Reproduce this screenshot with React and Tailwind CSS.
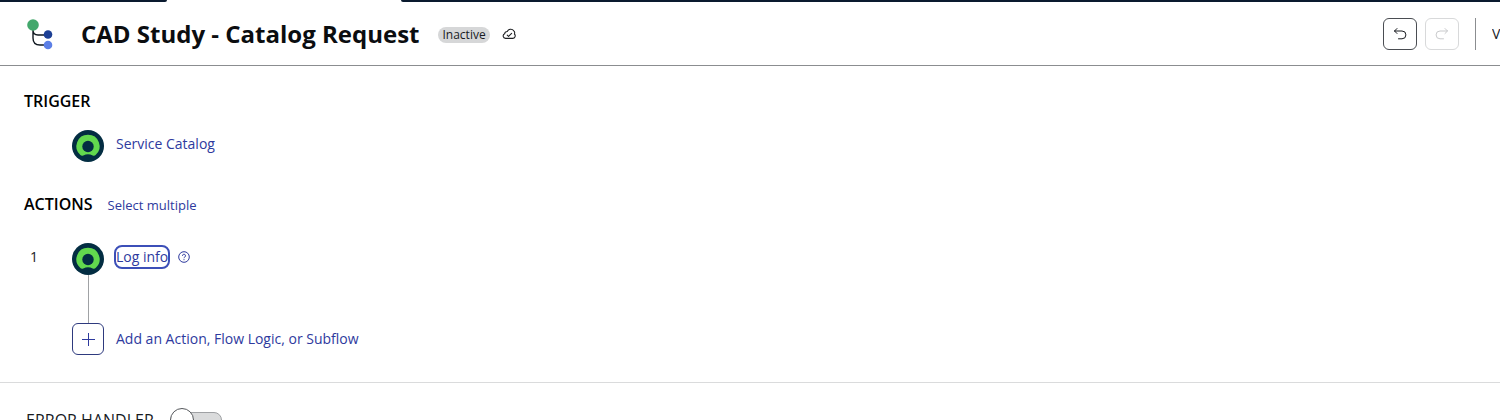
import React, { useState } from 'react';

const FlowIcon = () => (
    <svg className="w-7 h-8" viewBox="0 0 28 32" fill="none">
        <path d="M7 10v10q0 7 7 7h9M7 12q0 5 5 5h11" stroke="#101820" strokeWidth="1.4" />
        <circle cx="7" cy="7" r="5.8" fill="#43a86c" />
        <circle cx="22" cy="16.5" r="4.3" fill="#1c3f94" />
        <circle cx="22" cy="27" r="4.3" fill="#5c7fe6" />
    </svg>
);

const StepIcon = () => (
    <svg className="w-8 h-8 shrink-0" viewBox="0 0 32 32">
        <circle cx="16" cy="16" r="16" fill="#032d42" />
        <path
            d="M16 4.8A11.5 11.5 0 0 0 8.400 25a2.300 2.300 0 0 0 2.900.4 10 10 0 0 1 9.400 0 2.300 2.300 0 0 0 2.900-.4A11.500 11.500 0 0 0 16 4.800z"
            fill="#62d84e"
        />
        <circle cx="16" cy="16.5" r="5.700" fill="#032d42" />
    </svg>
);

const SavedIcon = () => (
    <svg className="w-3.5 h-3.5" viewBox="0 0 16 16" fill="none" stroke="#1d1f22" strokeLinecap="round" strokeLinejoin="round">
        <path d="M4 13h8.200a2.900 2.900 0 0 0 2-5 3.200 3.200 0 0 0-.7-3.600 4.300 4.300 0 0 0-7.500.8A3 3 0 0 0 3 7.800 2.700 2.700 0 0 0 4 13z" strokeWidth="1.2" />
        <path d="M6 9.300l1.500 1.500L11 7.300" strokeWidth="1.2" />
    </svg>
);

const UndoIcon = ({ className }) => (
    <svg className={className} viewBox="0 0 16 16" fill="none" stroke="currentColor" strokeLinecap="round" strokeLinejoin="round">
        <path d="M5 2.500L2.500 5 5 7.500M2.500 5h7.500a3.900 3.900 0 0 1 0 7.800H6.500" />
    </svg>
);

const HelpIcon = () => (
    <svg className="w-3 h-3" viewBox="0 0 12 12" fill="none" stroke="currentColor">
        <circle cx="6" cy="6" r="5.300" />
        <path d="M4.500 4.800a1.500 1.500 0 1 1 2.300 1.200q-.8.500-.8 1.200M6 8.200v1" />
    </svg>
);

const App = () => {
    const [errorHandler, setErrorHandler] = useState(false);

    return (
        <div className="h-screen overflow-hidden bg-white text-sm text-[#181a1f] font-['Open_Sans',sans-serif]">
            {/* Tab strip */}
            <div className="flex h-0.5">
                <div className="w-[167px] bg-[#0a1a2f] rounded-br-sm" />
                <div className="w-[234px]" />
                <div className="flex-1 bg-[#0a1a2f] rounded-bl-sm" />
            </div>

            {/* Header */}
            <header className="flex items-center h-16 pl-[26px] border-b border-[#8b8d90]">
                <FlowIcon />
                <h1 className="ml-[27px] text-2xl font-bold text-[#0b0d10] whitespace-nowrap">CAD Study - Catalog Request</h1>
                <span className="ml-[19px] mt-0.5 px-1 h-4 leading-4 text-xs rounded-full bg-[#d6d7d8]">Inactive</span>
                <span className="ml-3">
                    <SavedIcon />
                </span>
                <div className="ml-auto flex items-center">
                    <button type="button" aria-label="Undo" className="flex items-center justify-center w-[34px] h-8 border border-[#4a4d52] rounded-md">
                        <UndoIcon className="w-4 h-4" />
                    </button>
                    <button type="button" aria-label="Redo" disabled className="ml-2 flex items-center justify-center w-[34px] h-8 border border-[#d8d9da] rounded-md text-[#c9cacc]">
                        <UndoIcon className="w-4 h-4 -scale-x-100" />
                    </button>
                    <div className="ml-4 w-px h-8 bg-[#8b8d90]" />
                    <span className="ml-4 w-2 overflow-hidden">V</span>
                </div>
            </header>

            <main className="px-6 pt-6">
                {/* Trigger */}
                <h2 className="text-base leading-[22px] font-semibold text-black">TRIGGER</h2>
                <div className="flex mt-[18px] pl-12">
                    <StepIcon />
                    <a href="#trigger" className="ml-3 mt-1 leading-5 text-[#2e3a9e]">Service Catalog</a>
                </div>

                {/* Actions */}
                <div className="flex items-baseline mt-[31px]">
                    <h2 className="text-base leading-[22px] font-semibold text-black">ACTIONS</h2>
                    <button type="button" className="ml-[15px] text-[13px] leading-5 text-[#2e3a9e]">Select multiple</button>
                </div>
                <div className="flex mt-7">
                    <span className="w-12 pl-1.5 pt-1 leading-5">1</span>
                    <div className="flex flex-col items-center">
                        <StepIcon />
                        <div className="w-px h-12 bg-[#a0a2a5]" />
                    </div>
                    <a href="#action-1" className="ml-2.5 mt-0.5 h-6 leading-5 border-2 border-[#3c4fb8] rounded-lg text-[#2e3a9e]">Log info</a>
                    <button type="button" aria-label="Help" className="ml-2 mt-2 h-3 text-[#2e3a9e]">
                        <HelpIcon />
                    </button>
                </div>
                <button type="button" className="flex items-start ml-12 text-[#2e3a9e]">
                    <span className="flex items-center justify-center w-8 h-8 border border-[#2e3a7e] rounded-md">
                        <svg className="w-4 h-4" viewBox="0 0 16 16" stroke="currentColor">
                            <path d="M8.500 2v13M2 8.500h13" />
                        </svg>
                    </span>
                    <span className="ml-3 mt-1.5 leading-5">Add an Action, Flow Logic, or Subflow</span>
                </button>
            </main>

            {/* Error handler */}
            <section className="mt-[27px] pt-[25px] px-[26px] border-t border-[#dadbdc]">
                <label className="flex items-center">
                    <span className="text-base leading-6">ERROR HANDLER</span>
                    <span className="relative ml-4 flex items-center w-[52px] h-6">
                        <input
                            type="checkbox"
                            checked={errorHandler}
                            onChange={(e) => setErrorHandler(e.target.checked)}
                            className="peer appearance-none w-full h-4 rounded-full border border-[#9fa1a4] bg-[#dadbdc]"
                        />
                        <span className="absolute left-0 top-0 w-6 h-6 rounded-full border border-[#55585c] bg-white peer-checked:left-7" />
                    </span>
                </label>
            </section>
        </div>
    );
};

export default App;
